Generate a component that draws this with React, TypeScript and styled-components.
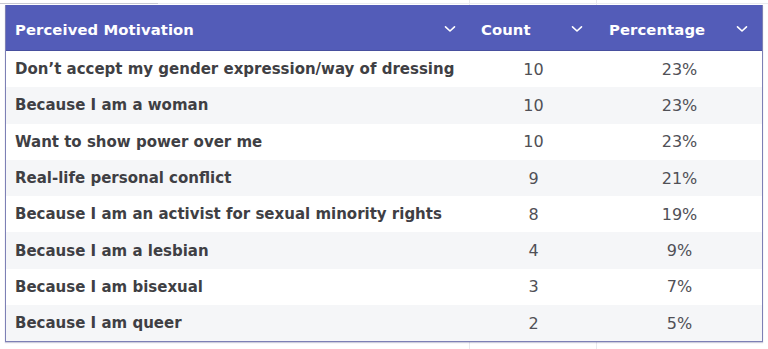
import styled, { createGlobalStyle } from "styled-components";

const GlobalStyle = createGlobalStyle`
    html, body {
        margin: 0;
        padding: 0;
        background: #ffffff;
    }
    body {
        font-family: "DejaVu Sans", "Noto Sans", sans-serif;
    }
`;

const COLUMNS = "464px 127px 1fr";

const Page = styled.div`
    width: 768px;
    height: 349px;
    box-sizing: border-box;
    padding: 5px 5px 0 5px;
    background:
        linear-gradient(#e9e9ee, #e9e9ee) 469px 0 / 1px 100% no-repeat,
        linear-gradient(#e9e9ee, #e9e9ee) 596px 0 / 1px 100% no-repeat,
        linear-gradient(#c9c9d2, #c9c9d2) 0 3px / 158px 1px no-repeat,
        linear-gradient(#ebebef, #ebebef) 158px 3px / 610px 1px no-repeat,
        #ffffff;
`;

const StyledTable = styled.div`
    width: 758px;
    box-sizing: border-box;
    border: 1px solid #7d80b5;
    border-top: none;
    box-shadow: 0 1px 1px rgba(60, 60, 120, 0.25);
    background: #ffffff;
`;

const HeaderRow = styled.div`
    display: grid;
    grid-template-columns: ${COLUMNS};
    height: 46px;
    background-color: #535cb8;
    border-bottom: 1px solid #474f9e;
    box-sizing: border-box;
`;

const HeaderCell = styled.div<{ $pad: number }>`
    display: flex;
    align-items: center;
    justify-content: space-between;
    padding: 3px 14px 0 ${(p) => p.$pad}px;
    color: #ffffff;
    font-weight: 700;
    font-size: 14.8px;
    letter-spacing: 0.1px;
`;

const Row = styled.div<{ $shade: boolean }>`
    display: grid;
    grid-template-columns: ${COLUMNS};
    height: 36.3px;
    align-items: center;
    background-color: ${(p) => (p.$shade ? "#f5f6f8" : "#ffffff")};
`;

const LabelCell = styled.div`
    padding-left: 9px;
    color: #3f3f44;
    font-weight: 700;
    font-size: 15px;
    white-space: nowrap;
`;

const NumberCell = styled.div`
    text-align: center;
    color: #505056;
    font-size: 16px;
`;

function Chevron() {
    return (
        <svg width="12" height="8" viewBox="0 0 12 8" fill="none">
            <path d="M1.5 1.8 L6 6 L10.5 1.8" stroke="#ffffff" strokeWidth="1.6" strokeLinecap="round" strokeLinejoin="round" />
        </svg>
    );
}

const rows: [string, number, string][] = [
    ["Don’t accept my gender expression/way of dressing", 10, "23%"],
    ["Because I am a woman", 10, "23%"],
    ["Want to show power over me", 10, "23%"],
    ["Real-life personal conflict", 9, "21%"],
    ["Because I am an activist for sexual minority rights", 8, "19%"],
    ["Because I am a lesbian", 4, "9%"],
    ["Because I am bisexual", 3, "7%"],
    ["Because I am queer", 2, "5%"],
];

export default function App() {
    const rowElements = rows.map(([label, count, pct], index) => (
        <Row $shade={index % 2 === 1} key={index}>
            <LabelCell>{label}</LabelCell>
            <NumberCell>{count}</NumberCell>
            <NumberCell>{pct}</NumberCell>
        </Row>
    ));
    return (
        <>
            <GlobalStyle />
            <Page>
                <StyledTable>
                    <HeaderRow>
                        <HeaderCell $pad={9}>Perceived Motivation<Chevron /></HeaderCell>
                        <HeaderCell $pad={11}>Count<Chevron /></HeaderCell>
                        <HeaderCell $pad={12}>Percentage<Chevron /></HeaderCell>
                    </HeaderRow>
                    {rowElements}
                </StyledTable>
            </Page>
        </>
    );
}
